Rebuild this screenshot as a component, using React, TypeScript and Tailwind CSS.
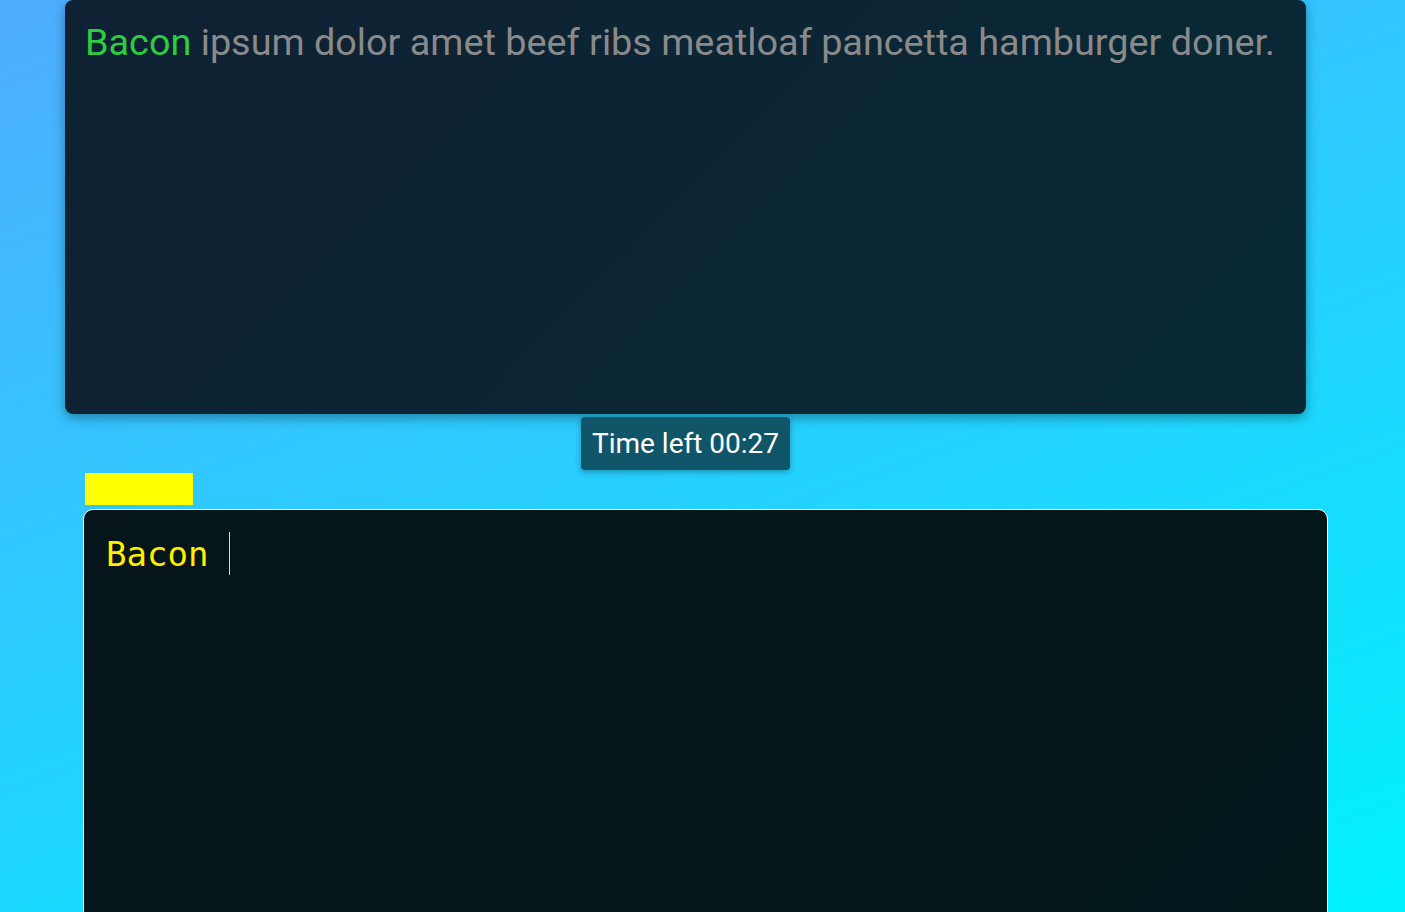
import React from "react";

export default function App() {
  return (
    <div className="min-h-[912px] h-[912px] overflow-hidden bg-[linear-gradient(160deg,#4facfe_0%,#00f2fe_100%)]">
      <div className="w-[1371px] flex flex-col items-center">
        <div className="w-[1241px] h-[414px] rounded-lg bg-[linear-gradient(135deg,#0f2133_0%,#082a35_100%)] shadow-[0_4px_12px_rgba(0,0,0,0.35)] px-5 pt-[18px]">
          <p className="font-['Roboto',sans-serif] text-[37.8px] leading-[48px] text-[#8a8a8a] whitespace-nowrap">
            <span className="text-[#2ecc40]">Bacon</span> ipsum dolor amet beef ribs meatloaf pancetta hamburger doner.
          </p>
        </div>
        <div className="mt-[3px] h-[53px] px-[11px] flex items-center rounded bg-[#115568] shadow-[0_2px_6px_rgba(0,0,0,0.3)]">
          <span className="font-['Roboto',sans-serif] text-[28px] text-white leading-none">Time left 00:27</span>
        </div>
      </div>
      <div className="ml-[85px] mt-[3px] w-[108px] h-[32px] bg-[#ffff00]" />
      <div className="ml-[83px] mt-[4px] w-[1245px] h-[420px] rounded-[10px] border border-white bg-[linear-gradient(135deg,#071519_0%,#01171a_100%)] px-[22px] pt-[21px]">
        <div className="flex items-center h-[44px]">
          <span className="font-['DejaVu_Sans_Mono',monospace] text-[34px] text-[#ffee00] whitespace-pre leading-none translate-y-px">Bacon </span>
          <span className="w-px h-[43px] bg-[#ffee00]" />
        </div>
      </div>
    </div>
  );
}
